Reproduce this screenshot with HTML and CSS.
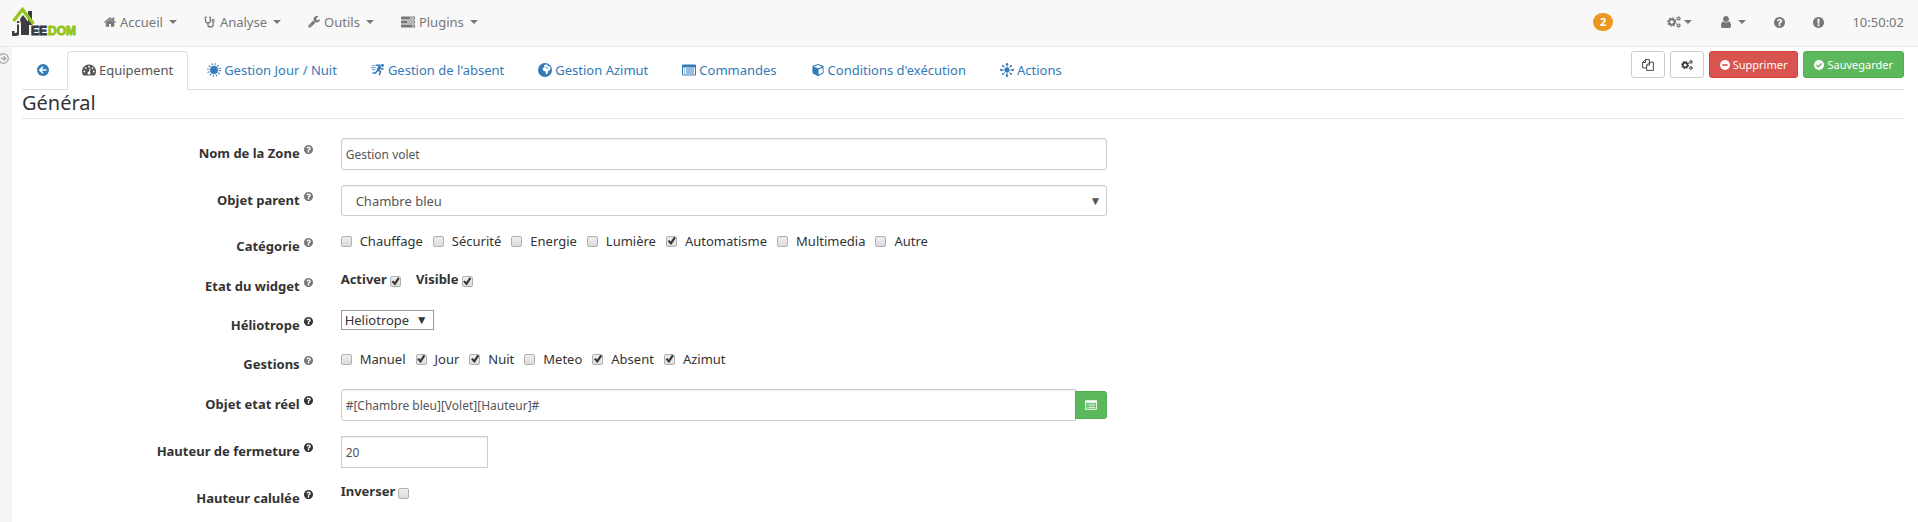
FILE: index.html
```html
<!DOCTYPE html>
<html lang="fr">
<head>
<meta charset="utf-8">
<title>Jeedom</title>
<link rel="stylesheet" href="styles.css">
</head>
<body>
<svg class="sprite" aria-hidden="true">
  <symbol id="help" viewBox="128 128 1536 1536"><path d="M1024 1376v-192q0-14-9-23t-23-9h-192q-14 0-23 9t-9 23v192q0 14 9 23t23 9h192q14 0 23-9t9-23zm256-672q0-88-55.5-163t-138.5-116-170-41q-243 0-371 213-15 24 8 42l132 100q7 6 19 6 16 0 25-12 53-68 86-92 34-24 86-24 48 0 85.5 26t37.5 59q0 38-20 61t-68 45q-63 28-115.5 86.5t-52.5 125.5v36q0 14 9 23t23 9h192q14 0 23-9t9-23q0-19 21.5-49.5t54.5-49.5q32-18 49-28.5t46-35 44.5-48 28-60.5 12.5-81zm384 192q0 209-103 385.5t-279.5 279.5-385.5 103-385.5-103-279.5-279.5-103-385.5 103-385.5 279.5-279.5 385.5-103 385.5 103 279.5 279.5 103 385.5z"/></symbol>
  <symbol id="alert" viewBox="128 128 1536 1536"><path d="M896 128q209 0 385.5 103t279.5 279.5 103 385.5-103 385.5-279.5 279.5-385.5 103-385.5-103-279.5-279.5-103-385.5 103-385.5 279.5-279.5 385.5-103zm128 1247v-190q0-14-9-23.5t-22-9.5h-192q-13 0-23 10t-10 23v190q0 13 10 23t23 10h192q13 0 22-9.5t9-23.5zm-2-344l18-621q0-12-10-18-10-8-24-8h-220q-14 0-24 8-10 6-10 18l17 621q0 10 10 17.5t24 7.5h185q14 0 23.5-7.5t10.5-17.5z"/></symbol>
  <symbol id="home" viewBox="80 180 1632 1400"><path d="M1472 992v480q0 26-19 45t-45 19h-384v-384h-256v384h-384q-26 0-45-19t-19-45v-480q0-1 .5-3t.5-3l575-474 575 474q1 2 1 6zm223-69l-62 74q-8 9-21 11h-3q-13 0-21-7l-692-577-692 577q-12 8-24 7-13-2-21-11l-62-74q-8-10-7-23.5t11-21.5l719-599q32-26 76-26t76 26l244 204v-195q0-14 9-23t23-9h192q14 0 23 9t9 23v408l219 182q10 8 11 21.5t-7 23.5z"/></symbol>
  <symbol id="wrench" viewBox="64 128 1664 1664"><path d="M448 1472q0-26-19-45t-45-19-45 19-19 45 19 45 45 19 45-19 19-45zm644-420l-682 682q-37 37-90 37-52 0-91-37l-106-108q-38-36-38-90 0-53 38-91l681-681q39 98 114.5 173.5t173.5 114.5zm634-435q0 39-23 106-47 134-164.5 217.5t-258.5 83.5q-185 0-316.5-131.5t-131.5-316.5 131.5-316.5 316.5-131.5q58 0 121.5 16.5t107.5 46.5q16 11 16 28t-16 28l-293 169v224l193 107q5-3 79-48.5t135.5-81 70.5-35.5q15 0 23.5 10t8.5 25z"/></symbol>
  <symbol id="user" viewBox="128 128 1536 1536"><path d="M1536 1399q0 109-62.5 187t-150.5 78h-854q-88 0-150.5-78t-62.5-187q0-85 8.5-160.5t31.5-152 58.5-131 94-89 134.5-34.5q131 128 313 128t313-128q76 0 134.5 34.5t94 89 58.5 131 31.5 152 8.5 160.5zm-256-887q0 159-112.5 271.5t-271.5 112.5-271.5-112.5-112.5-271.5 112.5-271.5 271.5-112.5 271.5 112.5 112.5 271.5z"/></symbol>
  <symbol id="steth" viewBox="0 0 12 12"><path d="M1 1.2H2.6M5.2 1.2H6.8M1.4 1.2v3.2a2.5 2.5 0 0 0 5 0V1.2M3.9 7v1.4a2.6 2.6 0 0 0 5.2 0V5.6" fill="none" stroke="currentColor" stroke-width="1.3"/><circle cx="9.1" cy="4.4" r="1.1" fill="none" stroke="currentColor" stroke-width="1.1"/></symbol>
  <symbol id="tasks" viewBox="0 0 14 11"><path fill-rule="evenodd" d="M.5 0h13q.5 0 .5.5v2q0 .5-.5.5H.5Q0 3 0 2.5v-2Q0 0 .5 0zM9 1v1h4V1zM.5 4h13q.5 0 .5.5v2q0 .5-.5.5H.5Q0 7 0 6.500v-2Q0 4 .5 4zM6 5v1h7V5zM.5 8h13q.5 0 .5.5v2q0 .5-.5.5H.5q-.5 0-.5-.5v-2Q0 8 .5 8zm10.500 1v1h2V9z"/></symbol>
  <symbol id="cogs" viewBox="0 0 14 12"><g fill="none" stroke="currentColor"><circle cx="4.800" cy="6" r="2.700" stroke-width="1.900"/><circle cx="4.800" cy="6" r="4.100" stroke-width="1.200" stroke-dasharray="1.600 1.620"/><circle cx="11.500" cy="2.500" r="1.300" stroke-width="1.100"/><circle cx="11.500" cy="2.500" r="2.100" stroke-width=".7" stroke-dasharray="1.100 1.100"/><circle cx="11.500" cy="9.500" r="1.300" stroke-width="1.100"/><circle cx="11.500" cy="9.500" r="2.100" stroke-width=".7" stroke-dasharray="1.100 1.100"/></g></symbol>
  <symbol id="back" viewBox="0 0 12 12"><circle cx="6" cy="6" r="6"/><path d="M9.600 6H3M6 2.800L2.800 6 6 9.200" fill="none" stroke="#fff" stroke-width="1.600"/></symbol>
  <symbol id="gauge" viewBox="0 0 14 11"><path d="M7 0a7 7 0 0 1 6 10.600q-.3.400-.8.400H1.800q-.5 0-.8-.4A7 7 0 0 1 7 0z"/><g fill="#fff"><circle cx="2.300" cy="7" r=".9"/><circle cx="3.700" cy="3.600" r=".9"/><circle cx="7" cy="2.200" r=".9"/><circle cx="10.500" cy="3.600" r=".9"/><circle cx="11.800" cy="7" r=".9"/><circle cx="7" cy="8.500" r="1.500"/><path d="M6.600 8L7.800 3.700l.8.200L7.600 8.200z"/></g></symbol>
  <symbol id="sun" viewBox="0 0 14 14"><circle cx="7" cy="7" r="3.900"/><circle cx="7" cy="7" r="5.700" fill="none" stroke="currentColor" stroke-width="2.400" stroke-dasharray=".900 2.084"/></symbol>
  <symbol id="runner" viewBox="0 0 15 13"><circle cx="12.300" cy="1.700" r="1.600"/><path d="M5 1.500h4.500L7.200 6.500l3 1.800-1.400 3.900M7 7L4.800 9.800H1.500M9.200 3l2 2.300h2.300" fill="none" stroke="currentColor" stroke-width="1.600"/><path d="M1 1.800h3M0 4h5M1 6.200h3.500" stroke="currentColor" stroke-width=".8"/><path d="M8.500 1.500l2.500 2-2.500 4-2.500-1z"/></symbol>
  <symbol id="globe" viewBox="0 0 12 12"><circle cx="6" cy="6" r="6"/><path fill="#fff" d="M5 2.200l1.500-1 2 .4-.4 1.200 1.700-.2 1 2-.9 1.900-1.200.2-.5 2.200-1.300.9-.5-2.600L4.300 6.500l-.4-1.900 1.800-1z"/><path d="M6.300 3.400l1.500.3.900 1.300-1.400-.5z"/></symbol>
  <symbol id="list" viewBox="0 0 14 11"><path fill-rule="evenodd" d="M1 0h12q1 0 1 1v9q0 1-1 1H1q-1 0-1-1V1q0-1 1-1zm0 3v7h12V3z"/><path d="M2 4h1v1H2zm2 0h8v1H4zM2 6h1v1H2zm2 0h8v1H4zM2 8h1v1H2zm2 0h8v1H4z"/></symbol>
  <symbol id="cube" viewBox="0 0 12 13"><path fill-rule="evenodd" d="M6 0l5.400 2q.6.200.6.800v6.700q0 .6-.5.800L6.500 13h-1L.5 10.300Q0 10.100 0 9.500V2.800q0-.6.600-.8zM6 1.200L1.400 2.900 6 4.600l4.600-1.700zM6.600 5.800v5.800L11 9.300V4.200z"/></symbol>
  <symbol id="hub" viewBox="0 0 14 14"><circle cx="7" cy="7" r="2.400"/><path d="M7 2v10M2 7h10M3.400 3.400l7.200 7.200M10.600 3.400l-7.200 7.200" stroke="currentColor" stroke-width=".8"/><circle cx="7" cy="1.300" r="1.200"/><circle cx="7" cy="12.700" r="1.200"/><circle cx="1.300" cy="7" r="1.200"/><circle cx="12.700" cy="7" r="1.200"/><circle cx="3" cy="3" r="1.100"/><circle cx="11" cy="3" r="1.100"/><circle cx="3" cy="11" r="1.100"/><circle cx="11" cy="11" r="1.100"/></symbol>
  <symbol id="copy" viewBox="0 0 12 12"><path d="M3.500.6h3.900v2.600M3.500.6L.6 3.500v5.400h4M3.500.6v2.900H.6M7.500 3.200h3.900v8.200H4.600V6.100zM7.500 3.200v2.900H4.600" fill="none" stroke="currentColor" stroke-width=".9"/></symbol>
  <symbol id="minus" viewBox="0 0 12 12"><circle cx="6" cy="6" r="6"/><path d="M2.800 5h6.400v2H2.800z" fill="#d9534f"/></symbol>
  <symbol id="check" viewBox="0 0 12 12"><circle cx="6" cy="6" r="6"/><path d="M3 6l2.200 2.200L9.200 4.200" fill="none" stroke="#5cb85c" stroke-width="1.700"/></symbol>
  <symbol id="open" viewBox="0 0 12 12"><g fill="none" stroke="currentColor" stroke-width="1.400"><circle cx="6" cy="6" r="5.200"/><path d="M3 6h5M6 3.500L8.500 6 6 8.500"/></g></symbol>
</svg>

<header class="navbar">
  <a class="brand" href="#" aria-label="Jeedom">
    <svg width="66" height="30" viewBox="0 0 66 30">
      <path fill="#3c3c43" d="M16 4h4v14h-4zM8 12l3-4 6 8v12H9V17z"/>
      <path fill="none" stroke="#3c3c43" stroke-width="3" d="M6.500 14v11q0 2.500-3 2.500H1V24"/>
      <path fill="#f8f8f8" d="M7 14.500h1V28H7zM5 16h3v1.500H5z"/>
      <path fill="none" stroke="#93c61c" stroke-width="3.400" d="M1.500 14L10.500 2.500 21.500 17"/>
      <text class="logo-dark" x="19" y="28">EE</text>
      <text class="logo-green" x="36" y="28">DOM</text>
    </svg>
  </a>
  <nav class="menu">
    <a href="#"><svg class="i12"><use href="#home"/></svg>Accueil<i class="caret"></i></a>
    <a href="#"><svg class="i12"><use href="#steth"/></svg>Analyse<i class="caret"></i></a>
    <a href="#"><svg class="i12"><use href="#wrench"/></svg>Outils<i class="caret"></i></a>
    <a href="#"><svg class="i14"><use href="#tasks"/></svg>Plugins<i class="caret"></i></a>
  </nav>
  <nav class="menu menu-right">
    <a class="badge" href="#">2</a>
    <a class="tight" href="#" aria-label="Configuration"><svg class="i14"><use href="#cogs"/></svg><i class="caret"></i></a>
    <a href="#" aria-label="Profil"><svg class="i12"><use href="#user"/></svg><i class="caret"></i></a>
    <a href="#" aria-label="Aide"><svg class="i11"><use href="#help"/></svg></a>
    <a href="#" aria-label="Alertes"><svg class="i11"><use href="#alert"/></svg></a>
    <a href="#">10:50:02</a>
  </nav>
</header>

<div class="page">
  <aside class="side"><svg class="i11"><use href="#open"/></svg></aside>
  <main class="content">
    <div class="topline">
      <nav class="tabs">
        <a class="back" href="#" aria-label="Retour"><svg class="i12"><use href="#back"/></svg></a>
        <a class="active" href="#"><svg class="i14"><use href="#gauge"/></svg>Equipement</a>
        <a href="#"><svg class="i14 tall"><use href="#sun"/></svg>Gestion Jour / Nuit</a>
        <a href="#"><svg class="i14 tall"><use href="#runner"/></svg>Gestion de l'absent</a>
        <a href="#"><svg class="i14 tall"><use href="#globe"/></svg>Gestion Azimut</a>
        <a href="#"><svg class="i14"><use href="#list"/></svg>Commandes</a>
        <a href="#"><svg class="i14"><use href="#cube"/></svg>Conditions d'exécution</a>
        <a href="#"><svg class="i14 tall"><use href="#hub"/></svg>Actions</a>
      </nav>
      <div class="actions">
        <button class="btn" type="button" aria-label="Dupliquer"><svg class="i12"><use href="#copy"/></svg></button>
        <button class="btn" type="button" aria-label="Configuration avancée"><svg class="i12"><use href="#cogs"/></svg></button>
        <button class="btn danger" type="button"><svg class="i10"><use href="#minus"/></svg>Supprimer</button>
        <button class="btn success" type="button"><svg class="i10"><use href="#check"/></svg>Sauvegarder</button>
      </div>
    </div>

    <h1>Général</h1>

    <form class="form">
      <div class="row">
        <label class="name" for="zone">Nom de la Zone<svg class="hint soft"><use href="#help"/></svg></label>
        <div class="field"><input class="text" id="zone" type="text" value="Gestion volet"></div>
      </div>
      <div class="row">
        <label class="name" for="parent">Objet parent<svg class="hint soft"><use href="#help"/></svg></label>
        <div class="field"><span class="pick wide"><select id="parent"><option>Chambre bleu</option></select></span></div>
      </div>
      <div class="row checks">
        <span class="name">Catégorie<svg class="hint soft"><use href="#help"/></svg></span>
        <div class="field options">
          <label><input type="checkbox">Chauffage</label>
          <label><input type="checkbox">Sécurité</label>
          <label><input type="checkbox">Energie</label>
          <label><input type="checkbox">Lumière</label>
          <label><input type="checkbox" checked>Automatisme</label>
          <label><input type="checkbox">Multimedia</label>
          <label><input type="checkbox">Autre</label>
        </div>
      </div>
      <div class="row">
        <span class="name">Etat du widget<svg class="hint soft"><use href="#help"/></svg></span>
        <div class="field flags">
          <label>Activer<input type="checkbox" checked></label>
          <label>Visible<input type="checkbox" checked></label>
        </div>
      </div>
      <div class="row">
        <label class="name" for="helio">Héliotrope<svg class="hint"><use href="#help"/></svg></label>
        <div class="field"><span class="pick"><select id="helio"><option>Heliotrope</option></select></span></div>
      </div>
      <div class="row checks">
        <span class="name">Gestions<svg class="hint soft"><use href="#help"/></svg></span>
        <div class="field options">
          <label><input type="checkbox">Manuel</label>
          <label><input type="checkbox" checked>Jour</label>
          <label><input type="checkbox" checked>Nuit</label>
          <label><input type="checkbox">Meteo</label>
          <label><input type="checkbox" checked>Absent</label>
          <label><input type="checkbox" checked>Azimut</label>
        </div>
      </div>
      <div class="row">
        <label class="name" for="etat">Objet etat réel<svg class="hint"><use href="#help"/></svg></label>
        <div class="field group">
          <input class="text" id="etat" type="text" value="#[Chambre bleu][Volet][Hauteur]#">
          <button class="btn success" type="button" aria-label="Choisir une commande"><svg class="i12"><use href="#list"/></svg></button>
        </div>
      </div>
      <div class="row">
        <label class="name" for="fermeture">Hauteur de fermeture<svg class="hint"><use href="#help"/></svg></label>
        <div class="field"><input class="text short" id="fermeture" type="text" value="20"></div>
      </div>
      <div class="row">
        <span class="name">Hauteur calulée<svg class="hint"><use href="#help"/></svg></span>
        <div class="field flags"><label>Inverser<input type="checkbox"></label></div>
      </div>
    </form>
  </main>
</div>
</body>
</html>
```

FILE: styles.css
```css
* { box-sizing: border-box; }

body {
  margin: 0;
  min-height: 100vh;
  display: flex;
  flex-direction: column;
  background: #fff;
  color: #333;
  font: 13px/18px "Noto Sans", "Open Sans", sans-serif;
}

a { color: #337ab7; text-decoration: none; }
svg { flex: none; fill: currentColor; }
input, select, button { font: inherit; margin: 0; }

.sprite { position: absolute; width: 0; height: 0; }
.i10 { width: 10px; height: 10px; }
.i11 { width: 11px; height: 11px; }
.i12 { width: 12px; height: 12px; }
.i14 { width: 14px; height: 12px; }
.i14.tall { height: 14px; }

/* top bar */
.navbar {
  display: flex;
  align-items: center;
  height: 47px;
  padding: 0 14px 2px 12px;
  background: #f8f8f8;
  border-bottom: 1px solid #e7e7e7;
}
.brand { display: flex; margin-right: 26px; }
.brand text { font: bold 12px "Liberation Sans", Arial, sans-serif; stroke-width: 1px; }
.logo-dark { fill: #3c3c43; stroke: #3c3c43; }
.logo-green { fill: #93c61c; stroke: #93c61c; }
.menu { display: flex; align-items: center; gap: 27px; }
.menu a { display: flex; align-items: center; gap: 4px; color: #777; }
.menu a.tight { gap: 1px; }
.menu-right { margin-left: auto; gap: 28px; }
.caret {
  margin-left: 2px;
  border: 4px solid transparent;
  border-top-color: currentColor;
  border-bottom: 0;
}
.menu a.badge {
  margin-right: 26px;
  padding: 0 7px;
  border-radius: 9px;
  background: #ec971f;
  color: #fff;
  font-size: 11px;
  font-weight: bold;
}

/* page */
.page { flex: 1; display: flex; }
.side { width: 12px; padding-top: 3px; background: #f5f5f5; color: #aaa; overflow: hidden; }
.side svg { margin-left: -2px; }
.content { flex: 1; min-width: 0; padding: 4px 14px 0 10px; }

.topline { display: flex; justify-content: space-between; border-bottom: 1px solid #ddd; }
.tabs { display: flex; gap: 4px; margin-bottom: -1px; }
.tabs a {
  display: flex;
  align-items: center;
  gap: 3px;
  height: 39px;
  padding: 0 14px 1px;
  border: 1px solid transparent;
  border-radius: 4px 4px 0 0;
}
.tabs a.back { padding-right: 13px; }
.tabs a.active { color: #555; background: #fff; border-color: #ddd #ddd #fff; }

.actions { display: flex; align-items: flex-start; gap: 5px; }
.btn {
  display: flex;
  align-items: center;
  gap: 3px;
  height: 27px;
  padding: 0 9px;
  border: 1px solid #ccc;
  border-radius: 3px;
  background: #fff;
  color: #333;
  font-size: 11px;
}
.btn.danger { background: #d9534f; border-color: #d43f3a; color: #fff; }
.btn.success { background: #5cb85c; border-color: #4cae4c; color: #fff; }
.actions .btn { padding: 0 10px; }

h1 {
  margin: 0 0 19px;
  padding-bottom: 2px;
  border-bottom: 1px solid #e5e5e5;
  font-size: 20px;
  font-weight: normal;
  line-height: 26px;
}

/* form */
.form { display: grid; gap: 15px; }
.row { display: grid; grid-template-columns: repeat(12, 1fr); column-gap: 30px; align-items: start; min-height: 24px; }
.row.checks { min-height: 25px; }
.name {
  grid-column: span 2;
  display: flex;
  justify-content: flex-end;
  gap: 4px;
  margin-right: -2px;
  padding-top: 6px;
  font-weight: bold;
  white-space: nowrap;
}
.hint { width: 9px; height: 9px; margin-top: 1px; }
.soft { color: #777; }
.field { grid-column: span 5; display: flex; }

.text, .wide select {
  width: 100%;
  height: 32px;
  padding: 0 4px;
  border: 1px solid #ccc;
  border-radius: 3px;
  background: #fff;
  color: #555;
  box-shadow: inset 0 1px 1px rgba(0, 0, 0, .075);
}
.text { font-size: 12px; }
.text.short { width: 147px; border-radius: 0; }

.pick { position: relative; display: flex; }
.pick select { appearance: none; border: 1px solid #999; padding: 0 23px 0 3px; height: 20px; line-height: 18px; background: #fff; color: #333; }
.pick::after { content: "▼"; position: absolute; right: 6px; top: 0; bottom: 0; display: flex; align-items: center; font-size: 12px; pointer-events: none; }
.pick.wide { width: 100%; color: #555; }
.pick.wide select { height: 31px; padding: 0 14px; border-color: #ccc; color: #555; }

.options { gap: 10px; }
.options label { display: flex; align-items: center; gap: 8px; line-height: 20px; }
.flags { gap: 15px; }
.flags label { display: flex; align-items: center; gap: 3px; font-weight: bold; line-height: 16px; }
.flags input { margin-top: 5px; }

input[type="checkbox"] {
  appearance: none;
  flex: none;
  width: 11px;
  height: 11px;
  border: 1px solid #b0b0b0;
  border-radius: 2px;
  background: linear-gradient(#eee, #dcdcdc);
}
input[type="checkbox"]:checked::before {
  content: "";
  display: block;
  height: 9px;
  background: #333;
  clip-path: polygon(8% 52%, 28% 38%, 42% 58%, 78% 4%, 98% 18%, 46% 94%);
}

.group .text { flex: 1; border-radius: 3px 0 0 3px; }
.group .btn { align-self: center; height: 28px; margin-left: -1px; border-radius: 0 3px 3px 0; }
```
